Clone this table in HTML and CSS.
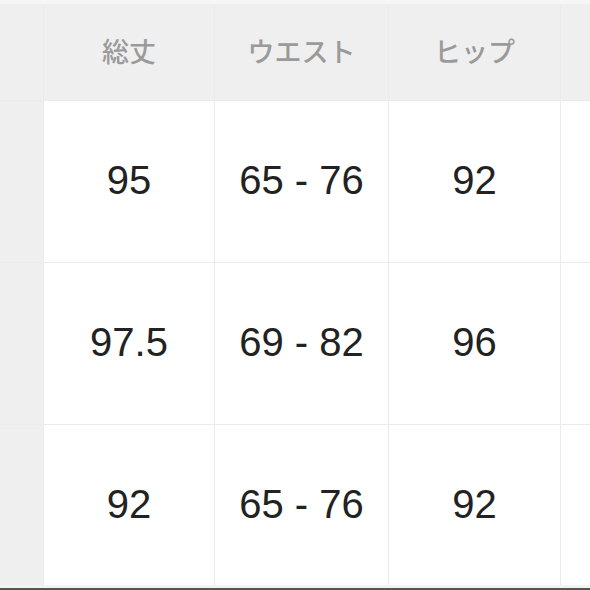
FILE: index.html
```html
<!DOCTYPE html>
<html lang="ja">
<head>
<meta charset="utf-8">
<link rel="stylesheet" href="styles.css">
</head>
<body>
<div class="page">
  <div class="topstrip"></div>
  <div class="table">
    <div class="cell side head"></div>
    <div class="cell head">総丈</div>
    <div class="cell head">ウエスト</div>
    <div class="cell head">ヒップ</div>
    <div class="cell head"></div>

    <div class="cell side"></div>
    <div class="cell">95</div>
    <div class="cell">65 - 76</div>
    <div class="cell">92</div>
    <div class="cell"></div>

    <div class="cell side"></div>
    <div class="cell">97.5</div>
    <div class="cell">69 - 82</div>
    <div class="cell">96</div>
    <div class="cell"></div>

    <div class="cell side"></div>
    <div class="cell">92</div>
    <div class="cell">65 - 76</div>
    <div class="cell">92</div>
    <div class="cell"></div>
  </div>
  <div class="bottomstrip"></div>
  <div class="bottomline"></div>
</div>
</body>
</html>
```
FILE: styles.css
```css
html, body {
  margin: 0;
  padding: 0;
  background: #f3f3f3;
}
.page {
  width: 590px;
  height: 590px;
  overflow: hidden;
  display: flex;
  flex-direction: column;
}
.topstrip {
  height: 4px;
  background: #f6f6f6;
  flex: none;
}
.table {
  display: grid;
  grid-template-columns: 43px 170px 173px 171px 1fr;
  grid-template-rows: 96px 161px 161px 160px;
  gap: 1px;
  background: #ebebeb;
  flex: none;
}
.cell {
  background: #ffffff;
  display: flex;
  align-items: center;
  justify-content: center;
  font-family: "Liberation Sans", Arial, sans-serif;
  font-size: 40px;
  color: #222222;
  padding-bottom: 2px;
}
.cell.side {
  background: #efefef;
}
.cell.head {
  background: #efefef;
  font-family: "Noto Sans CJK JP", sans-serif;
  font-size: 27px;
  font-weight: 500;
  color: #9a9a9a;
  padding-bottom: 3px;
}
.bottomstrip {
  flex: 1;
  background: #f3f3f3;
}
.bottomline {
  height: 2px;
  background: #555555;
  flex: none;
}
```
